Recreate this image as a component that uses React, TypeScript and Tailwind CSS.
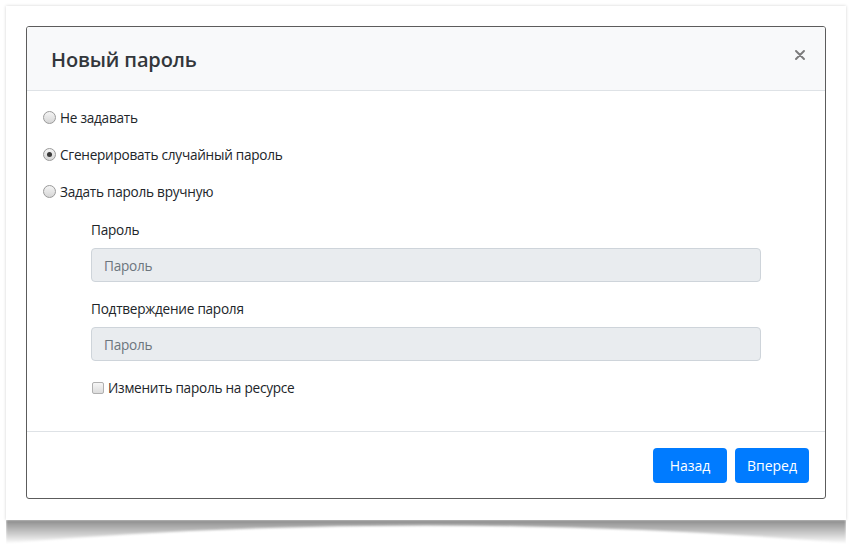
import React from "react";

function Radio({ checked }: { checked?: boolean }) {
  return (
    <span className="w-[13px] h-[13px] rounded-full border border-[#9a9a9a] bg-[linear-gradient(180deg,#f4f4f4,#d6d6d6)] flex items-center justify-center shrink-0">
      {checked && <span className="w-[5px] h-[5px] rounded-full bg-[#3a3a3a]" />}
    </span>
  );
}

export default function App() {
  const font = { fontFamily: '"Open Sans", "Noto Sans", sans-serif' };
  return (
    <div className="w-[860px] h-[549px] bg-white pt-[6px] pl-[6px]" style={font}>
      <div className="w-[840px] flex flex-col">
        <div className="w-[840px] h-[514px] bg-white shadow-[0_0_3px_rgba(0,0,0,0.18)] p-[20px] pb-[21px] relative z-10">
          <div className="w-[800px] h-[473px] border border-[#5c5c5c] rounded-[3px] flex flex-col bg-white overflow-hidden text-[#212529]">
            <div className="h-[64px] bg-[#f8f9fa] border-b border-[#dee2e6] flex items-center justify-between pl-[24px] pr-[19px]">
              <h5 className="text-[20px] leading-[30px] font-semibold tracking-[-0.15px] text-[#33373b] mt-[2px]">Новый пароль</h5>
              <svg width="10" height="10" viewBox="0 0 10 10" className="-mt-[8px] mr-[1px]">
                <path d="M1 1 L9 9 M9 1 L1 9" stroke="#7b7b7b" strokeWidth="1.9" strokeLinecap="round" />
              </svg>
            </div>
            <div className="flex-1 pt-[16px] px-[16px] text-[13.6px] tracking-[-0.25px] leading-[21px]">
              <div className="flex flex-col gap-[16px]">
                <label className="flex items-center gap-[4px]"><Radio /><span>Не задавать</span></label>
                <label className="flex items-center gap-[4px]"><Radio checked /><span>Сгенерировать случайный пароль</span></label>
                <label className="flex items-center gap-[4px]"><Radio /><span>Задать пароль вручную</span></label>
              </div>
              <div className="mx-[48px] mt-[17px] flex flex-col">
                <div className="mb-[8px]">Пароль</div>
                <div className="h-[34px] rounded-[4px] border border-[#ced4da] bg-[#e9ecef] flex items-center px-[12px] text-[#6c757d]">Пароль</div>
                <div className="mt-[16px] mb-[8px]">Подтверждение пароля</div>
                <div className="h-[34px] rounded-[4px] border border-[#ced4da] bg-[#e9ecef] flex items-center px-[12px] text-[#6c757d]">Пароль</div>
                <label className="mt-[16px] flex items-center gap-[4px] pl-[1px]">
                  <span className="w-[12px] h-[12px] rounded-[2px] border border-[#b0b0b0] bg-[linear-gradient(180deg,#f6f6f6,#dcdcdc)] shrink-0" />
                  <span>Изменить пароль на ресурсе</span>
                </label>
              </div>
            </div>
            <div className="h-[67px] border-t border-[#dee2e6] flex items-center justify-end gap-[8px] pr-[16px] pt-[1px]">
              <button className="w-[74px] h-[35px] rounded-[4px] bg-[#007bff] text-white text-[14px]">Назад</button>
              <button className="w-[74px] h-[35px] rounded-[4px] bg-[#007bff] text-white text-[14px]">Вперед</button>
            </div>
          </div>
        </div>
        <svg width="840" height="26" viewBox="0 0 840 26" className="block">
          <defs>
            <linearGradient id="sg" gradientUnits="userSpaceOnUse" x1="0" y1="0" x2="0" y2="24">
              <stop offset="0" stopColor="#8c8c8c" />
              <stop offset="0.5" stopColor="#c4c4c4" />
              <stop offset="1" stopColor="#ffffff" />
            </linearGradient>
            <filter id="bl" x="-5%" y="-50%" width="110%" height="200%">
              <feGaussianBlur stdDeviation="1.2" />
            </filter>
          </defs>
          <path d="M0 0 H840 L840 23 Q420 -12 0 23 Z" fill="url(#sg)" filter="url(#bl)" />
        </svg>
      </div>
    </div>
  );
}
